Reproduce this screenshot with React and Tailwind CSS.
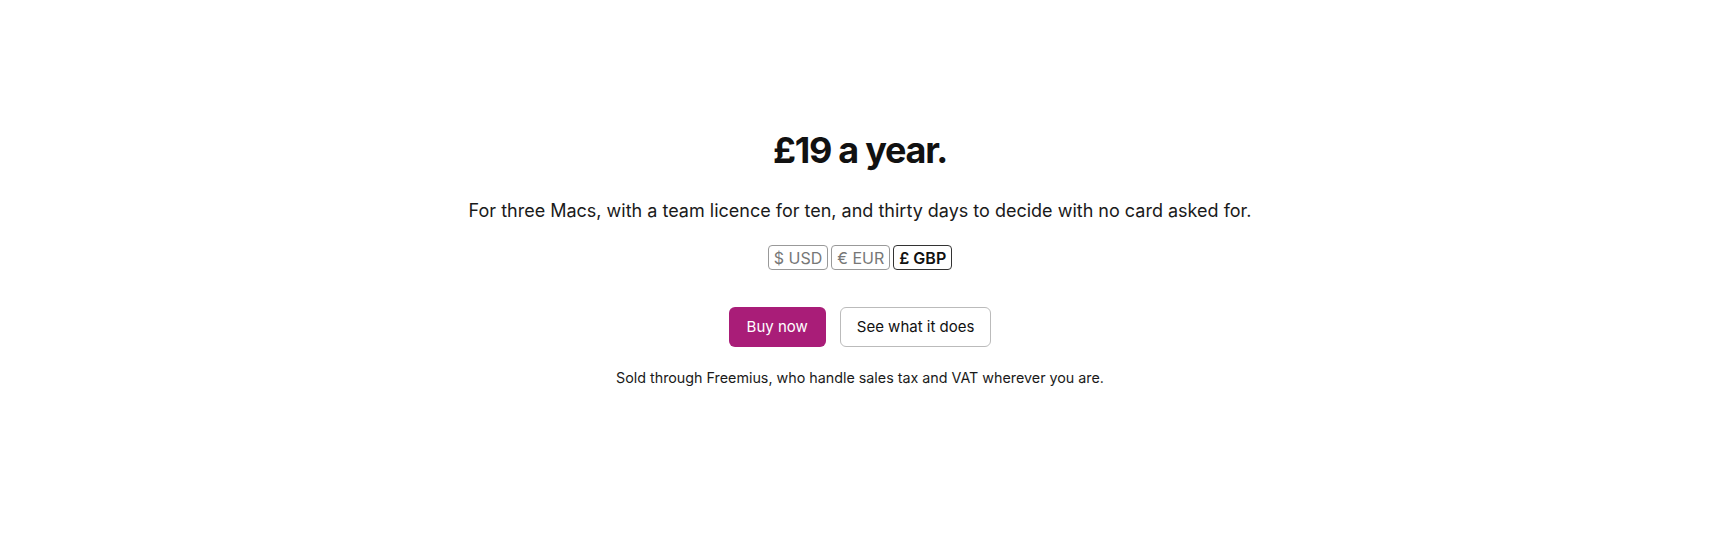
import { useState } from 'react'

const CURRENCIES = [
  { key: 'usd', label: '$ USD', price: '$24' },
  { key: 'eur', label: '€ EUR', price: '€22' },
  { key: 'gbp', label: '£ GBP', price: '£19' },
]

export default function App() {
  const [currency, setCurrency] = useState('gbp')
  const active = CURRENCIES.find(c => c.key === currency)

  return (
    <div className="min-h-[535px] w-full bg-white flex flex-col items-center pt-[130px] text-[#111] font-['Inter','Liberation_Sans',sans-serif]">
      <h1 className="text-[36px] leading-[40px] font-bold tracking-[-0.035em]">{active.price} a year.</h1>

      <p className="mt-[27px] text-[18px] leading-[28px] text-[#1a1a1a]">
        For three Macs, with a team licence for ten, and thirty days to decide with no card asked for.
      </p>

      {/* currency switcher */}
      <div className="mt-[20px] flex gap-[3px]">
        {CURRENCIES.map(c => (
          <button key={c.key} onClick={() => setCurrency(c.key)}
            className={`h-[25px] px-[5px] rounded-[4px] border text-[16px] leading-none ${
              currency === c.key
                ? 'border-[#333] text-[#111] font-semibold'
                : 'border-[#999] text-[#777]'
            }`}>
            {c.label}
          </button>
        ))}
      </div>

      <div className="mt-[37px] flex gap-[14px]">
        <a href="#" className="h-[40px] px-[18px] flex items-center rounded-[6px] bg-[#a91d78] text-white text-[15px]">Buy now</a>
        <a href="#" className="h-[40px] px-[16px] flex items-center rounded-[6px] border border-[#bbb] text-[#111] text-[15px]">See what it does</a>
      </div>

      <p className="mt-[20px] text-[14.3px] leading-[22px] text-[#1a1a1a]">
        Sold through Freemius, who handle sales tax and VAT wherever you are.
      </p>
    </div>
  )
}
